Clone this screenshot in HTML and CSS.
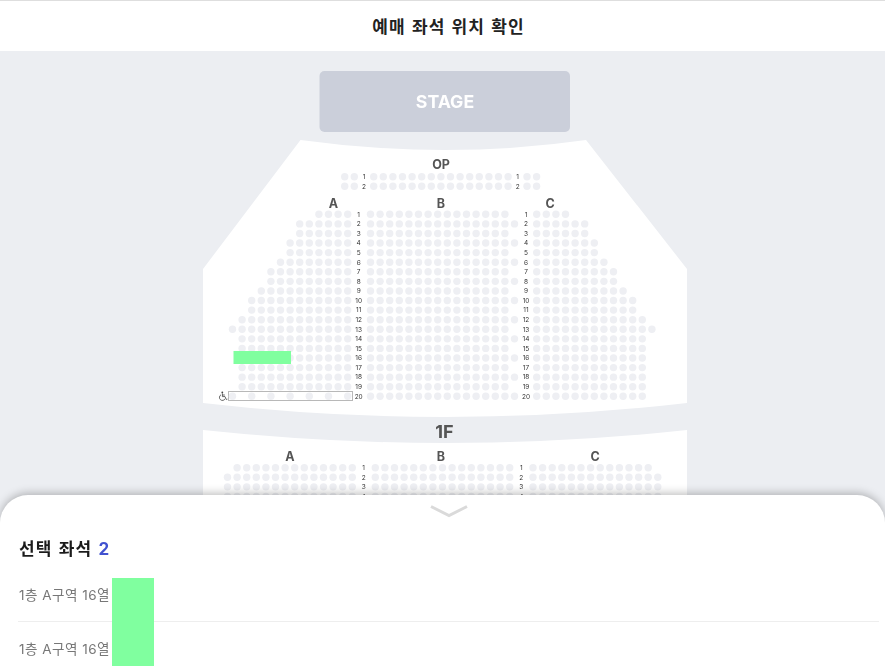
FILE: index.html
```html
<!DOCTYPE html>
<html lang="ko">
<head>
<meta charset="utf-8">
<title>예매 좌석 위치 확인</title>
<link rel="stylesheet" href="styles.css">
</head>
<body>
<div class="page">
  <header class="top-bar"><h1 class="top-title">예매 좌석 위치 확인</h1></header>
  <main class="map-area">
    <svg class="seat-map" id="seatMap" viewBox="0 51 885 618" width="885" height="618" xmlns="http://www.w3.org/2000/svg">
      <rect class="stage" x="319.5" y="71" width="250.5" height="61" rx="5"/>
      <text class="stage-text" x="445" y="108">STAGE</text>
      <path class="floor" d="M300.5 140 Q445 160 586 140 L687 269 L687 403 Q445 431 203 403 L203 269 Z"/>
      <path class="floor" d="M203 430 Q445 456 687 430 L687 669 L203 669 Z"/>
      <text class="block-label" x="441" y="169">OP</text>
      <text class="block-label" x="333.5" y="208">A</text>
      <text class="block-label" x="441" y="208">B</text>
      <text class="block-label" x="550" y="208">C</text>
      <text class="floor-label" x="444.5" y="438">1F</text>
      <text class="block-label" x="290" y="461">A</text>
      <text class="block-label" x="441" y="461">B</text>
      <text class="block-label" x="595" y="461">C</text>
      <rect class="wheel-box" x="228.5" y="391.5" width="124" height="9"/>
      <g id="seats"></g>
      <g class="wheel-icon">
        <circle cx="222.3" cy="392.4" r="0.9"/>
        <path d="M222.4 393.4 V396.6 H225 L226.4 399.6 L227.4 399.2 M222.4 395 H224.8 M221 394.8 A3 3 0 1 0 225.2 398.6"/>
      </g>
      <rect class="picked" x="233.5" y="351" width="57.5" height="13"/>
    </svg>
  </main>
  <section class="sheet">
    <div class="sheet-handle">
      <svg class="chevron" viewBox="0 0 38 13" width="38" height="13" xmlns="http://www.w3.org/2000/svg"><path d="M1 1.5 L19 10.5 L37 1.5"/></svg>
    </div>
    <h2 class="sheet-title">선택 좌석 <span class="sheet-count">2</span></h2>
    <ul class="seat-list">
      <li class="seat-row">1층 A구역 16열</li>
      <li class="seat-row">1층 A구역 16열</li>
      <li class="seat-mask"></li>
    </ul>
  </section>
</div>
<script src="seats.js"></script>
</body>
</html>
```
FILE: styles.css
```css
* { box-sizing: border-box; }
html, body { margin: 0; padding: 0; height: 100%; background: #fff; }
body { font-family: Inter, "Noto Sans CJK KR", sans-serif; overflow: hidden; }
.page { position: relative; width: 885px; height: 669px; overflow: hidden; background: #eceef2; }
.top-bar { height: 51px; background: #fff; border-top: 1px solid #dedede; padding: 0 0 1px 12px; display: flex; align-items: center; justify-content: center; }
.top-title { margin: 0; font-size: 17px; font-weight: 700; color: #222; letter-spacing: 1.1px; word-spacing: 1.1px; }
.map-area { height: 618px; }
.seat-map { display: block; will-change: transform; }
.stage { fill: #cbcfda; }
.stage-text { fill: #fff; font-size: 17.7px; font-weight: 700; text-anchor: middle; }
.floor { fill: #fff; }
.block-label { fill: #555; font-size: 12.5px; font-weight: 700; text-anchor: middle; }
.floor-label { fill: #555; font-size: 18px; font-weight: 700; text-anchor: middle; }
.seat { fill: #eeeff3; }
.row-num { fill: #333; font-size: 6.5px; text-anchor: middle; }
.wheel-box { fill: #fff; stroke: #b8b8b8; stroke-width: 1; }
.wheel-icon circle { fill: #444; }
.wheel-icon path { fill: none; stroke: #444; stroke-width: 0.8; }
.picked { fill: #80ff9f; }
.sheet { position: absolute; left: 0; right: 0; top: 495px; height: 174px; background: #fff; border-radius: 28px 28px 0 0; box-shadow: 0 -2px 8px rgba(0, 0, 0, 0.25); overflow: hidden; padding: 0 6px 0 18px; }
.sheet-handle { height: 26px; padding-top: 10px; display: flex; justify-content: center; }
.chevron { display: block; }
.chevron path { fill: none; stroke: #dadada; stroke-width: 3; }
.sheet-title { margin: 16px 0 0 1px; height: 32px; line-height: 24px; font-size: 17px; font-weight: 700; color: #1b1b1b; letter-spacing: 1.1px; word-spacing: 1.1px; }
.sheet-count { color: #4152d0; }
.seat-list { position: relative; list-style: none; margin: 0; padding: 0; }
.seat-row { height: 52px; display: flex; align-items: center; padding-left: 1px; font-size: 13.5px; letter-spacing: 0.5px; color: #777; }
.seat-row:first-child { height: 53px; padding-bottom: 2px; border-bottom: 1px solid #eee; }
.seat-mask { position: absolute; left: 94px; top: 8.5px; width: 41.5px; height: 88.5px; background: #80ff9f; }
```
FILE: seats.js
```js
(function () {
  var NS = 'http://www.w3.org/2000/svg';
  var holder = document.getElementById('seats');
  var P = 9.6;

  function seat(x, y) {
    var c = document.createElementNS(NS, 'circle');
    c.setAttribute('class', 'seat');
    c.setAttribute('cx', x.toFixed(2));
    c.setAttribute('cy', y.toFixed(2));
    c.setAttribute('r', '3.7');
    holder.appendChild(c);
  }
  function num(x, y, t) {
    var n = document.createElementNS(NS, 'text');
    n.setAttribute('class', 'row-num');
    n.setAttribute('x', x);
    n.setAttribute('y', (y + 2.3).toFixed(2));
    n.textContent = t;
    holder.appendChild(n);
  }
  function run(start, count, y) {
    for (var i = 0; i < count; i++) seat(start + i * P, y);
  }
  function runLeft(end, count, y) {
    for (var i = 0; i < count; i++) seat(end - i * P, y);
  }

  // OP
  [176.7, 186.3].forEach(function (y, i) {
    run(344.7, 2, y);
    num(364, y, i + 1);
    run(373.7, 15, y);
    num(517.7, y, i + 1);
    run(527, 2, y);
  });

  // Upper block, rows 1-20
  var side = [4, 6, 6, 7, 7, 8, 9, 9, 10, 11, 11, 12, 13, 12, 12, 12, 12, 12, 12];
  for (var r = 0; r < 20; r++) {
    var y = 214.3 + r * 9.58;
    if (r < 19) {
      runLeft(347.7, side[r], y);
    } else {
      for (var k = 0; k < 7; k++) seat(347.7 - k * 19.2, y);
    }
    num(358.7, y, r + 1);
    run(370.5, r % 2 === 0 ? 15 : 16, y);
    num(526, y, r + 1);
    run(536.7, r === 19 ? 12 : side[r], y);
  }

  // Lower block, partly under the sheet
  var lowerA = [13, 14, 14, 14, 14];
  for (var s = 0; s < 5; s++) {
    var ly = 467.7 + s * 9.58;
    runLeft(352.3, lowerA[s], ly);
    num(363.7, ly, s + 1);
    run(375.3, 15, ly);
    num(521.3, ly, s + 1);
    run(533, lowerA[s], ly);
  }
})();
```
